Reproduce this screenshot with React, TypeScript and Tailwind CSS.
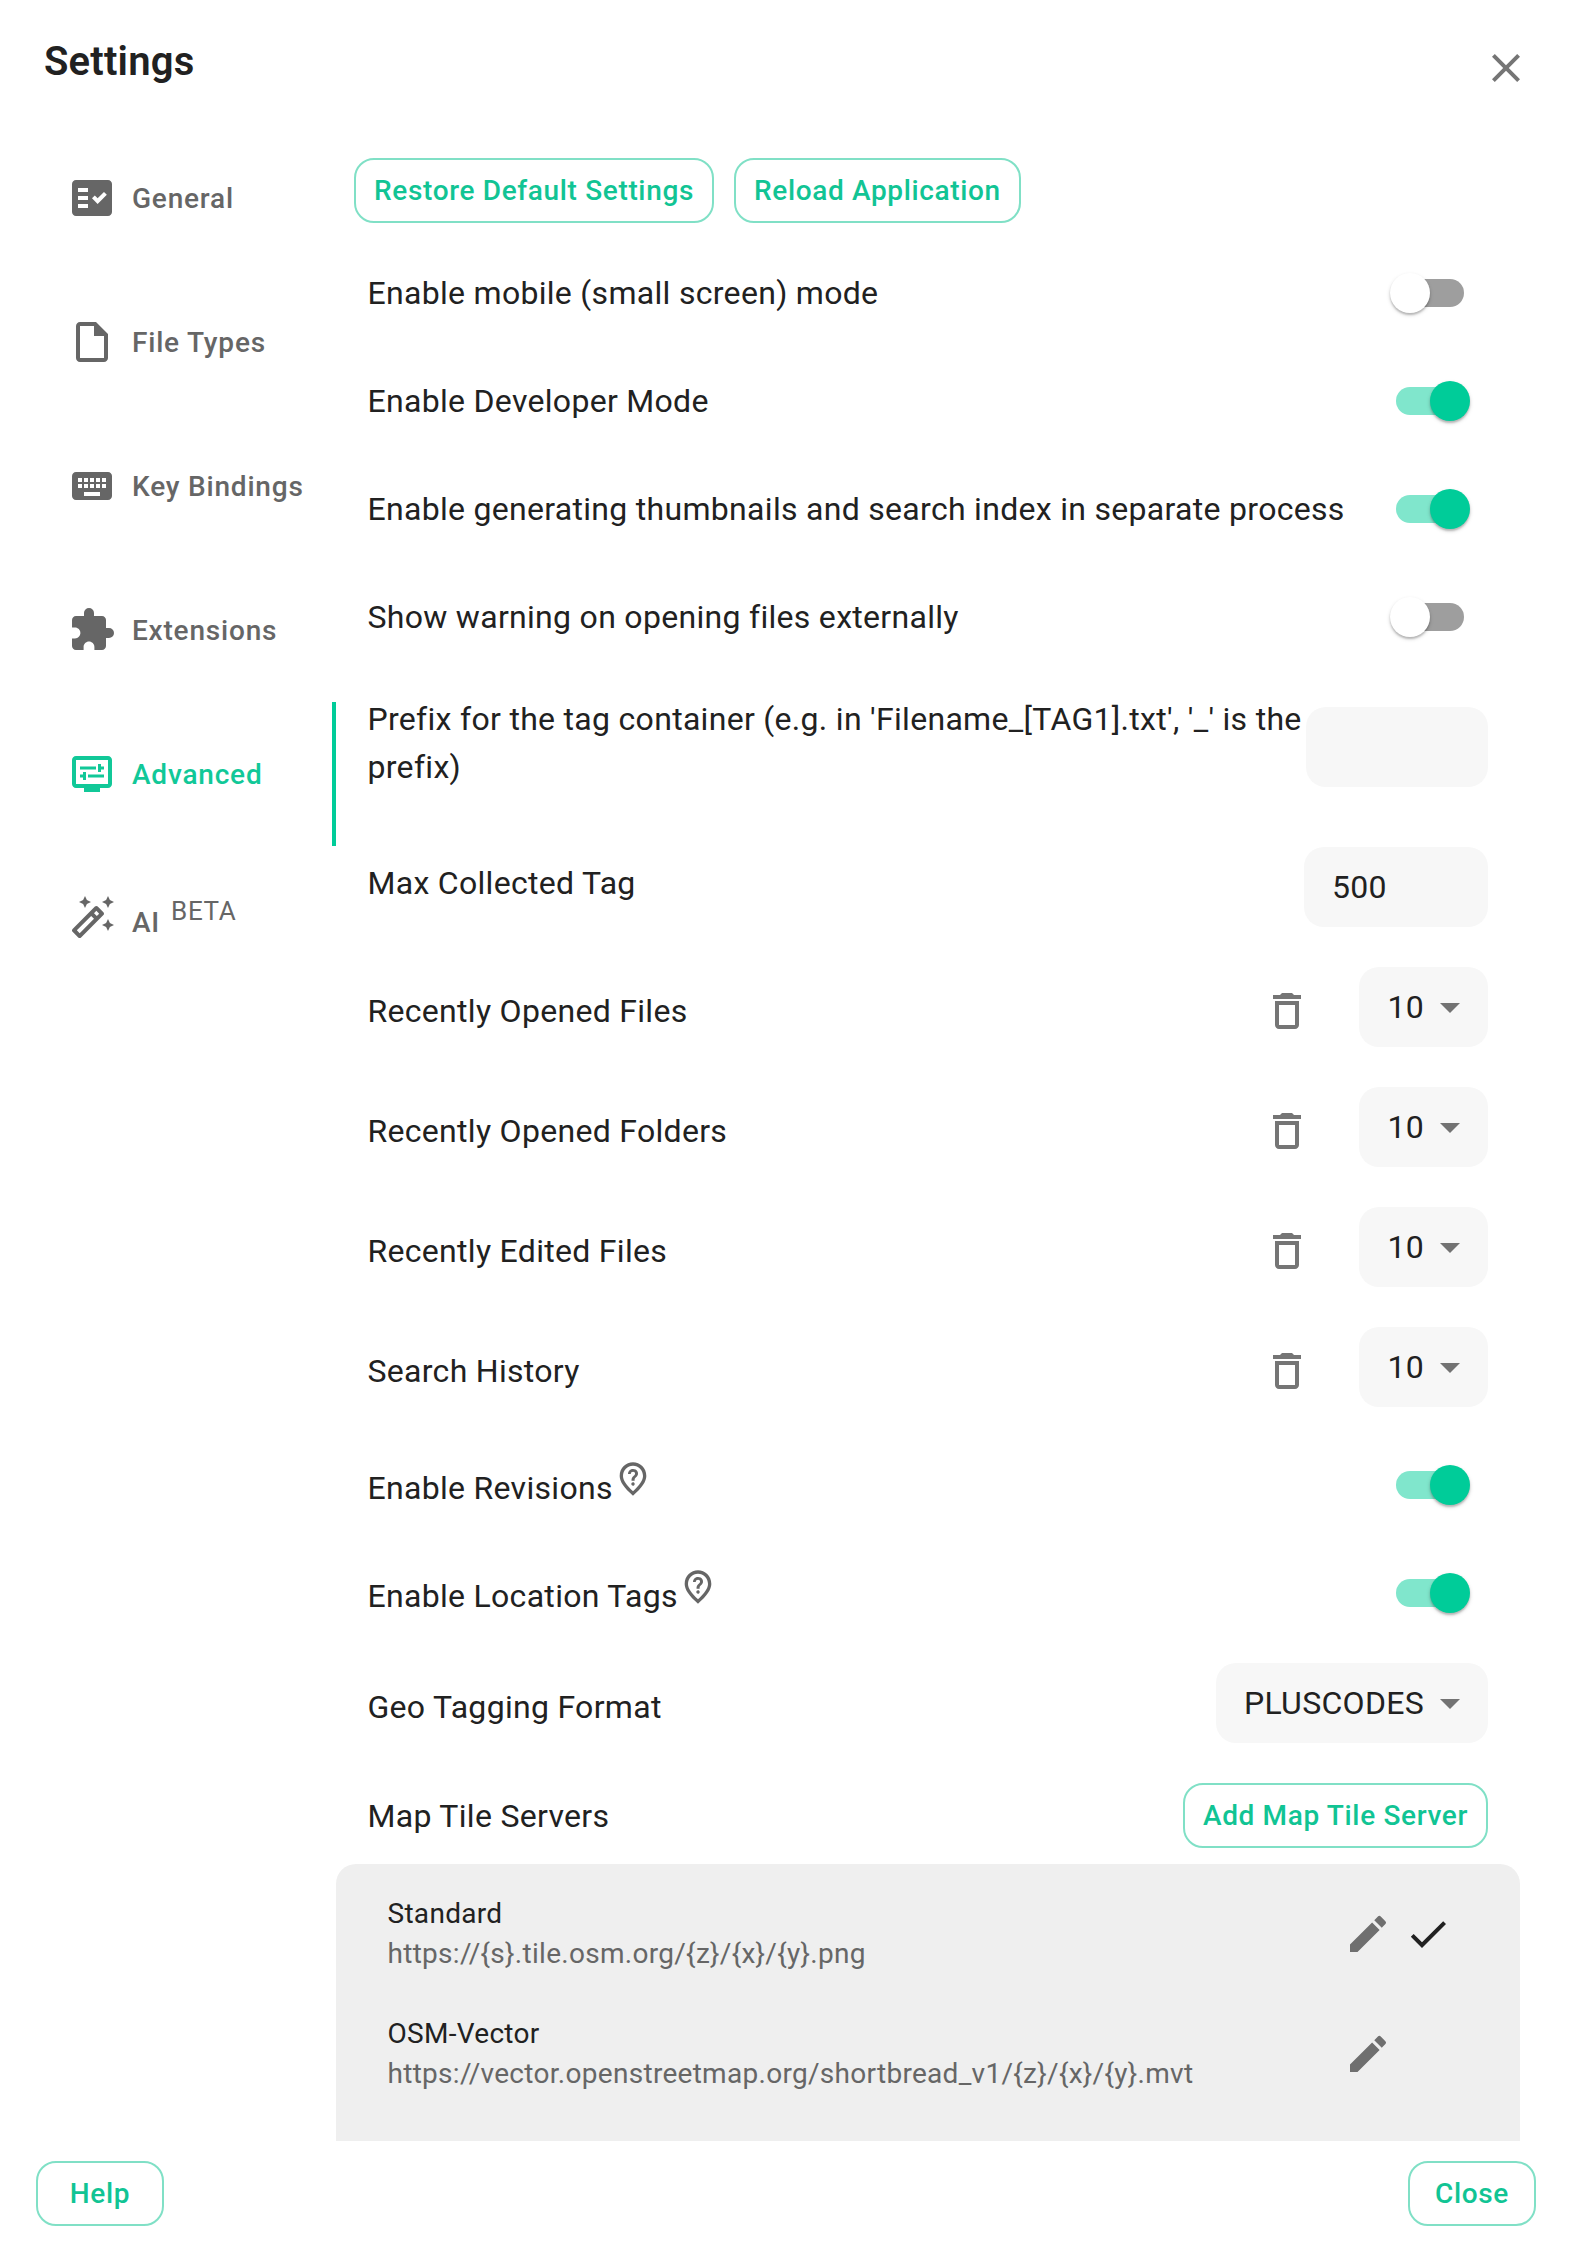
import type { ReactNode } from "react";
import {
  MdArrowDropDown,
  MdCheck,
  MdClose,
  MdEdit,
  MdExtension,
  MdFactCheck,
  MdKeyboard,
  MdOutlineDeleteOutline,
  MdOutlineInsertDriveFile,
  MdOutlineNotListedLocation,
} from "react-icons/md";

function AdvancedIcon() {
  return (
    <svg className="size-12" viewBox="0 0 24 24" fill="currentColor">
      <path d="M20 3H4c-1.1 0-2 .9-2 2v12c0 1.1.9 2 2 2h4v2h8v-2h4c1.1 0 2-.9 2-2V5c0-1.1-.9-2-2-2zm0 14H4V5h16v12zM6 8.250h8v1.500H6zM16.500 9.750H18v-1.500h-1.500V7H15v4h1.500zM10 12.250h8v1.500h-8zM7.500 15H9v-4H7.500v1.250H6v1.500h1.500z" />
    </svg>
  );
}

function WandIcon() {
  return (
    <svg className="size-12" viewBox="0 0 24 24" fill="currentColor">
      <path d="m20 7 .94-2.060L23 4l-2.060-.94L20 1l-.94 2.060L17 4l2.060.94zM8.500 7l.94-2.060L11.500 4l-2.060-.94L8.500 1l-.94 2.060L5.500 4l2.060.94zM20 12.500l-.94 2.060-2.060.94 2.060.94.94 2.060.94-2.060L23 15.500l-2.060-.94zM17.710 9.120l-2.830-2.830C14.680 6.100 14.430 6 14.170 6c-.26 0-.51.1-.71.29L2.290 17.460c-.39.39-.39 1.020 0 1.410l2.830 2.830c.2.200.45.300.71.300s.51-.1.710-.29l11.170-11.170c.39-.39.39-1.030 0-1.420zM14.170 8.420l1.410 1.410L14.410 11 13 9.590l1.170-1.170zM5.830 19.590l-1.410-1.410L11.590 11 13 12.410l-7.170 7.180z" />
    </svg>
  );
}

const tabs: { label: string; icon: ReactNode; active?: boolean; beta?: boolean }[] = [
  { label: "General", icon: <MdFactCheck className="size-12" /> },
  { label: "File Types", icon: <MdOutlineInsertDriveFile className="size-12" /> },
  { label: "Key Bindings", icon: <MdKeyboard className="size-12" /> },
  { label: "Extensions", icon: <MdExtension className="size-12" /> },
  { label: "Advanced", icon: <AdvancedIcon />, active: true },
  { label: "AI", icon: <WandIcon />, beta: true },
];

function Sidebar() {
  return (
    <nav className="w-[336px] shrink-0">
      {tabs.map((tab) => (
        <div
          key={tab.label}
          className={
            tab.active
              ? "flex h-36 items-center gap-4 border-r-4 border-[#00cc99] pl-[68px] text-[#11c898]"
              : "flex h-36 items-center gap-4 border-r-4 border-transparent pl-[68px] text-[#666666]"
          }
        >
          {tab.icon}
          {tab.beta ? (
            <span className="flex items-center gap-[11px] text-[28px] font-medium leading-[35px] tracking-[0.8px]">
              <span className="pt-2">{tab.label}</span>
              <span className="pb-3.5 text-[26px] font-normal tracking-[0.6px]">BETA</span>
            </span>
          ) : (
            <span className="text-[28px] font-[550] leading-[35px] tracking-[0.8px]">{tab.label}</span>
          )}
        </div>
      ))}
    </nav>
  );
}

function OutlineButton({ children, wide }: { children: ReactNode; wide?: boolean }) {
  return (
    <button
      className={
        wide
          ? "h-[65px] w-32 rounded-[20px] border-2 border-[#80e0c6] text-[28px] font-medium leading-[49px] tracking-[0.65px] text-[#11c494]"
          : "h-[65px] rounded-[20px] border-2 border-[#80e0c6] px-[18px] text-[28px] font-medium leading-[49px] tracking-[0.65px] text-[#11c494]"
      }
    >
      {children}
    </button>
  );
}

function Switch({ on }: { on?: boolean }) {
  return (
    <span className="mr-6 flex h-7 w-[68px] shrink-0 items-center">
      <span
        className={
          on
            ? "flex h-7 w-full items-center justify-end rounded-full bg-[#80e6cc]"
            : "flex h-7 w-full items-center rounded-full bg-[#9e9e9e]"
        }
      >
        <span
          className={
            on
              ? "-mr-1.5 size-10 shrink-0 rounded-full bg-[#00cc99] shadow-[0_2px_2px_rgba(0,0,0,0.2),0_2px_4px_rgba(0,0,0,0.15)]"
              : "-ml-1.5 size-10 shrink-0 rounded-full bg-white shadow-[0_2px_2px_rgba(0,0,0,0.2),0_2px_4px_rgba(0,0,0,0.14)]"
          }
        />
      </span>
    </span>
  );
}

function SwitchRow({ label, on, help }: { label: string; on?: boolean; help?: boolean }) {
  return (
    <div className="flex h-[108px] items-center justify-between">
      <span className={help ? "flex items-center pt-1.5" : "flex items-center"}>
        {label}
        {help && <MdOutlineNotListedLocation className="mb-[18px] ml-[0.5px] size-10 text-[#666666]" />}
      </span>
      <Switch on={on} />
    </div>
  );
}

function Select({ value }: { value: string }) {
  return (
    <div className="flex h-20 items-center gap-0.5 rounded-[20px] bg-[#f7f7f7] pl-7 pr-3.5">
      {value}
      <MdArrowDropDown className="size-12 text-[#737373]" />
    </div>
  );
}

function HistoryRow({ label }: { label: string }) {
  return (
    <div className="flex h-[120px] items-center">
      <span className="grow">{label}</span>
      <MdOutlineDeleteOutline className="mr-12 size-12 text-[#757575]" />
      <div className="mb-2">
        <Select value="10" />
      </div>
    </div>
  );
}

function Server({ name, url, selected }: { name: string; url: string; selected?: boolean }) {
  return (
    <div className="flex h-[120px] items-center pl-[51.5px] pr-[68px] text-[28px] leading-10 tracking-[0.29px]">
      <div className="grow">
        <div>{name}</div>
        <div className="text-[#666666]">{url}</div>
      </div>
      <MdEdit className="mr-3 size-12 text-[#6f6f6f]" />
      <span className="size-12">{selected && <MdCheck className="size-12" />}</span>
    </div>
  );
}

export default function App() {
  return (
    <div className="flex h-[2264px] w-[1574px] flex-col overflow-hidden bg-white font-[Roboto,sans-serif] text-[32px] leading-[48px] tracking-[0.3px] text-[#212121]">
      <header className="flex h-[126px] shrink-0 items-start justify-between pl-11 pr-11 pt-[29px]">
        <h1 className="pt-px text-[40px] font-semibold leading-[64px] tracking-[0.2px]">Settings</h1>
        <MdClose className="mt-[15px] size-12 text-[#757575]" />
      </header>

      <div className="flex h-[2015px] shrink-0 overflow-hidden">
        <Sidebar />
        <main className="w-[1184px]">
          <div className="flex gap-5 pl-[18px] pt-8">
            <OutlineButton>Restore Default Settings</OutlineButton>
            <OutlineButton>Reload Application</OutlineButton>
          </div>
          <div className="pl-[31.5px] pr-8 pt-4">
            <SwitchRow label="Enable mobile (small screen) mode" />
            <SwitchRow label="Enable Developer Mode" on />
            <SwitchRow label="Enable generating thumbnails and search index in separate process" on />
            <SwitchRow label="Show warning on opening files externally" />
            <div className="flex h-[152px] items-start justify-between pt-6">
              <span className="w-[938px] shrink-0">
                Prefix for the tag container (e.g. in 'Filename_[TAG1].txt', '_' is the prefix)
              </span>
              <div className="mt-3 h-20 w-[182px] shrink-0 rounded-[20px] bg-[#f7f7f7]" />
            </div>
            <div className="mb-1 flex h-[124px] items-center justify-between">
              <span className="pb-1">Max Collected Tag</span>
              <div className="mt-1 flex h-20 w-[184px] items-center rounded-[20px] bg-[#f7f7f7] pl-7">500</div>
            </div>
            <HistoryRow label="Recently Opened Files" />
            <HistoryRow label="Recently Opened Folders" />
            <HistoryRow label="Recently Edited Files" />
            <HistoryRow label="Search History" />
            <SwitchRow label="Enable Revisions" on help />
            <SwitchRow label="Enable Location Tags" on help />
            <div className="flex h-28 items-center justify-between">
              <span className="pt-2">Geo Tagging Format</span>
              <Select value="PLUSCODES" />
            </div>
            <div className="flex h-[105px] items-center justify-between pt-2">
              <span>Map Tile Servers</span>
              <OutlineButton>Add Map Tile Server</OutlineButton>
            </div>
          </div>
          <div className="h-[400px] rounded-t-[20px] bg-[#efefef] pt-2.5">
            <Server name="Standard" url="https://{s}.tile.osm.org/{z}/{x}/{y}.png" selected />
            <Server name="OSM-Vector" url="https://vector.openstreetmap.org/shortbread_v1/{z}/{x}/{y}.mvt" />
          </div>
        </main>
      </div>

      <footer className="flex justify-between pl-9 pr-[38px] pt-5">
        <OutlineButton wide>Help</OutlineButton>
        <OutlineButton wide>Close</OutlineButton>
      </footer>
    </div>
  );
}
